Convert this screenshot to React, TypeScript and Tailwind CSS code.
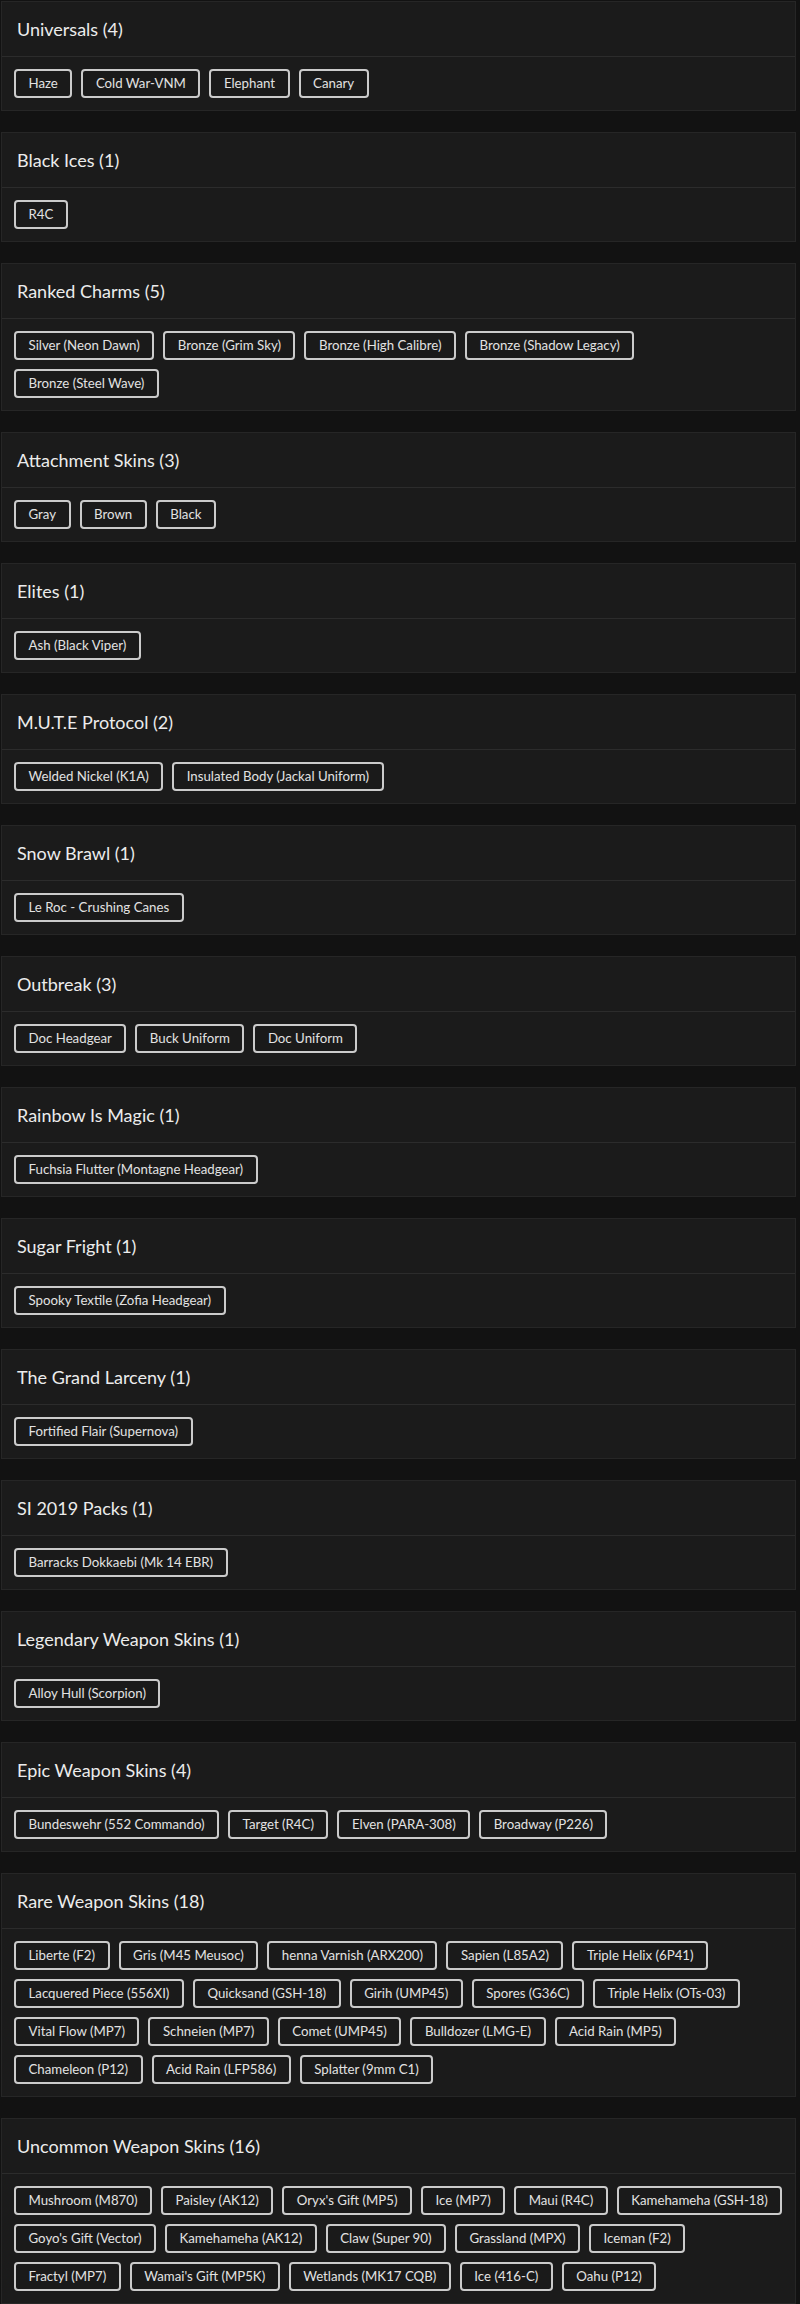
import React from 'react';

type Group = { title: string; items: string[] };

const GROUPS: Group[] = [
  { title: 'Universals', items: ['Haze', 'Cold War-VNM', 'Elephant', 'Canary'] },
  { title: 'Black Ices', items: ['R4C'] },
  {
    title: 'Ranked Charms',
    items: ['Silver (Neon Dawn)', 'Bronze (Grim Sky)', 'Bronze (High Calibre)', 'Bronze (Shadow Legacy)', 'Bronze (Steel Wave)'],
  },
  { title: 'Attachment Skins', items: ['Gray', 'Brown', 'Black'] },
  { title: 'Elites', items: ['Ash (Black Viper)'] },
  { title: 'M.U.T.E Protocol', items: ['Welded Nickel (K1A)', 'Insulated Body (Jackal Uniform)'] },
  { title: 'Snow Brawl', items: ['Le Roc - Crushing Canes'] },
  { title: 'Outbreak', items: ['Doc Headgear', 'Buck Uniform', 'Doc Uniform'] },
  { title: 'Rainbow Is Magic', items: ['Fuchsia Flutter (Montagne Headgear)'] },
  { title: 'Sugar Fright', items: ['Spooky Textile (Zofia Headgear)'] },
  { title: 'The Grand Larceny', items: ['Fortified Flair (Supernova)'] },
  { title: 'SI 2019 Packs', items: ['Barracks Dokkaebi (Mk 14 EBR)'] },
  { title: 'Legendary Weapon Skins', items: ['Alloy Hull (Scorpion)'] },
  {
    title: 'Epic Weapon Skins',
    items: ['Bundeswehr (552 Commando)', 'Target (R4C)', 'Elven (PARA-308)', 'Broadway (P226)'],
  },
  {
    title: 'Rare Weapon Skins',
    items: [
      'Liberte (F2)',
      'Gris (M45 Meusoc)',
      'henna Varnish (ARX200)',
      'Sapien (L85A2)',
      'Triple Helix (6P41)',
      'Lacquered Piece (556XI)',
      'Quicksand (GSH-18)',
      'Girih (UMP45)',
      'Spores (G36C)',
      'Triple Helix (OTs-03)',
      'Vital Flow (MP7)',
      'Schneien (MP7)',
      'Comet (UMP45)',
      'Bulldozer (LMG-E)',
      'Acid Rain (MP5)',
      'Chameleon (P12)',
      'Acid Rain (LFP586)',
      'Splatter (9mm C1)',
    ],
  },
  {
    title: 'Uncommon Weapon Skins',
    items: [
      'Mushroom (M870)',
      'Paisley (AK12)',
      "Oryx's Gift (MP5)",
      'Ice (MP7)',
      'Maui (R4C)',
      'Kamehameha (GSH-18)',
      "Goyo's Gift (Vector)",
      'Kamehameha (AK12)',
      'Claw (Super 90)',
      'Grassland (MPX)',
      'Iceman (F2)',
      'Fractyl (MP7)',
      "Wamai's Gift (MP5K)",
      'Wetlands (MK17 CQB)',
      'Ice (416-C)',
      'Oahu (P12)',
    ],
  },
];

const App: React.FC = () => {
  return (
    <div className="w-full min-h-screen bg-[#121212] pt-[1px] pl-[1px] pr-[4px] font-['Lato',sans-serif]">
      <div className="flex flex-col gap-[21px]">
        {GROUPS.map((group) => (
          <section key={group.title} className="bg-[#1b1b1b] border border-[#262626]">
            {/* Header */}
            <div className="border-b border-[#2c2c2c] pl-[15px] pr-4 py-[15px]">
              <h2 className="text-[18px] leading-6 text-[#ececec]">
                {group.title} ({group.items.length})
              </h2>
            </div>

            {/* Items */}
            <div className="flex flex-wrap gap-[9px] px-3 py-3">
              {group.items.map((item, i) => (
                <button
                  key={i}
                  className="h-[29px] px-[12.5px] border-2 border-[#cbcbcb] rounded-[4px] bg-[#1a1a1a] text-[13.25px] leading-[17px] text-[#e2e2e2] whitespace-nowrap"
                >
                  {item}
                </button>
              ))}
            </div>
          </section>
        ))}
      </div>
    </div>
  );
};

export default App;
